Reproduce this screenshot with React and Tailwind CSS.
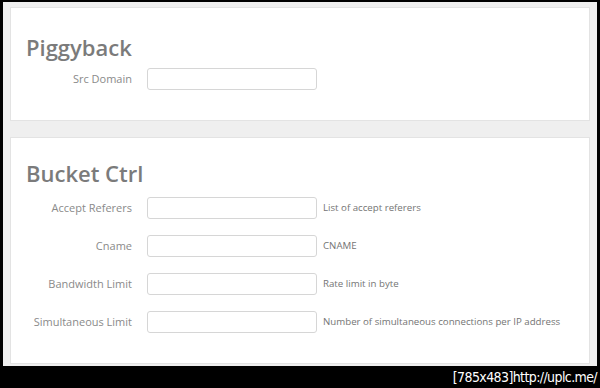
import React from 'react';

const Field = ({ label, help }) => (
  <div className="flex items-center h-[22px]">
    <label className="w-[121px] text-right text-[11px] text-[#8a8a8a]">{label}</label>
    <input
      type="text"
      className="ml-[15px] w-[170px] h-[22px] rounded-[3px] border border-[#d6d6d6] bg-white outline-none"
    />
    {help && <span className="ml-[6px] text-[9.7px] text-[#747474]">{help}</span>}
  </div>
);

const Card = ({ title, children, className = '' }) => (
  <section className={`bg-white border border-[#e3e3e3] ${className}`}>
    <h2 className="pl-[15px] text-[22px] font-semibold leading-none text-[#7b7b7b]">{title}</h2>
    {children}
  </section>
);

export default function App() {
  return (
    <div
      className="w-[600px] h-[388px] bg-black flex flex-col"
      style={{ fontFamily: '"Open Sans", "Noto Sans", sans-serif' }}
    >
      <div className="mt-[2px] mx-[3px] h-[364px] bg-[#efefef] px-[7px] pt-[5px] flex flex-col">
        <Card title="Piggyback" className="h-[114px] pt-[28px]">
          <div className="mt-[10px]">
            <Field label="Src Domain" />
          </div>
        </Card>
        <Card title="Bucket Ctrl" className="mt-[16px] h-[227px] pt-[24px]">
          <div className="mt-[13px] flex flex-col gap-[16px]">
            <Field label="Accept Referers" help="List of accept referers" />
            <Field label="Cname" help="CNAME" />
            <Field label="Bandwidth Limit" help="Rate limit in byte" />
            <Field label="Simultaneous Limit" help="Number of simultaneous connections per IP address" />
          </div>
        </Card>
      </div>
      <div className="flex-1 flex items-center justify-end pr-[3px]">
        <span
          className="text-white text-[14px] leading-none tracking-[-0.6px]"
          style={{ fontFamily: '"DejaVu Sans Condensed", "DejaVu Sans", sans-serif' }}
        >
          [785x483]http://uplc.me/
        </span>
      </div>
    </div>
  );
}
